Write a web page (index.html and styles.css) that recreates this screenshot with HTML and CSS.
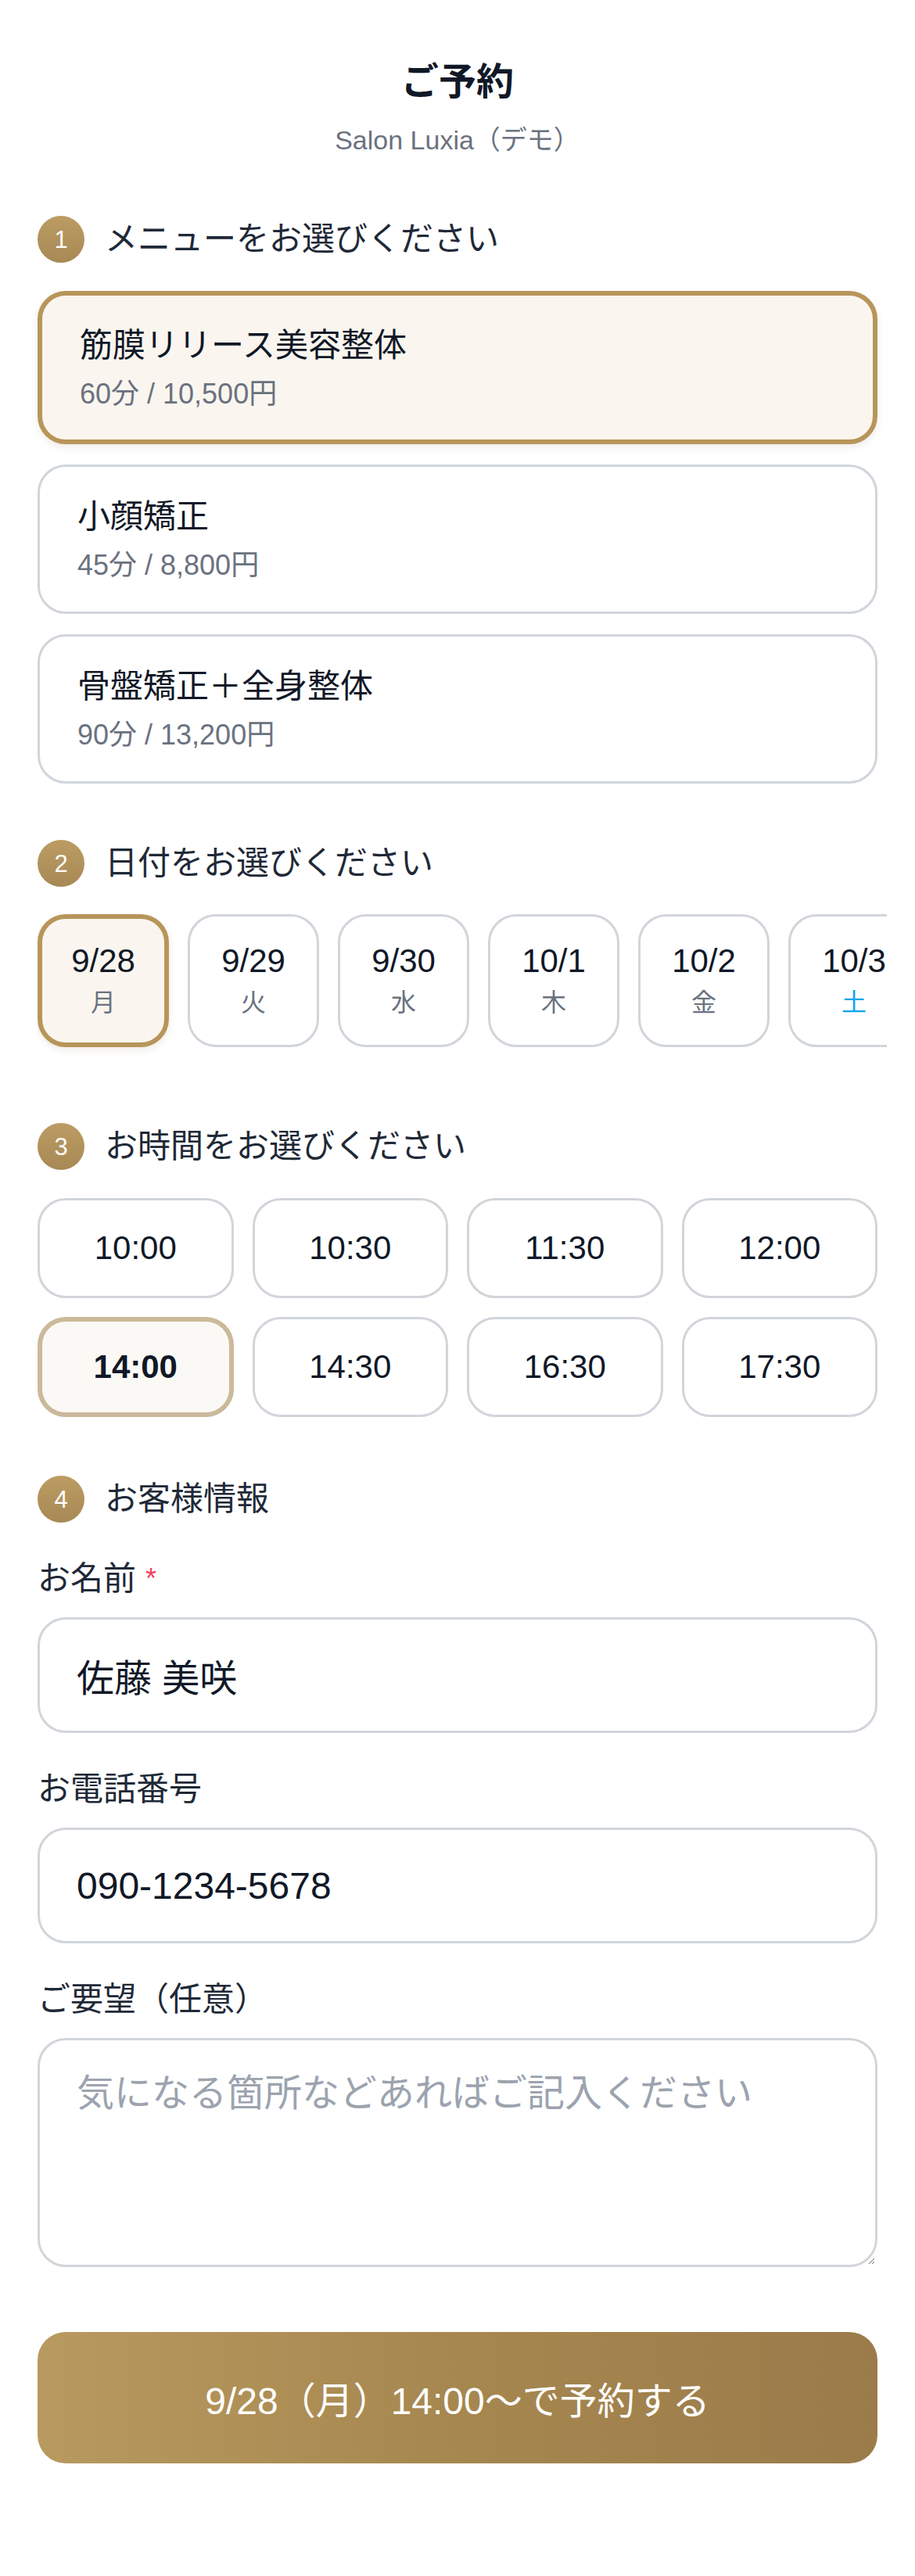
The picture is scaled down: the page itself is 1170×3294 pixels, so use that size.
FILE: index.html
```html
<!DOCTYPE html>
<html lang="ja">
<head>
<meta charset="utf-8">
<title>ご予約 - Salon Luxia</title>
<link rel="stylesheet" href="styles.css">
</head>
<body>
<main class="page">
  <header class="head">
    <h1 class="title">ご予約</h1>
    <p class="subtitle">Salon Luxia（デモ）</p>
  </header>

  <section class="section">
    <h2 class="step"><span class="step-num">1</span>メニューをお選びください</h2>
    <div class="menu-list">
      <div class="menu-card is-selected">
        <div class="menu-name">筋膜リリース美容整体</div>
        <div class="menu-meta">60分 / 10,500円</div>
      </div>
      <div class="menu-card">
        <div class="menu-name">小顔矯正</div>
        <div class="menu-meta">45分 / 8,800円</div>
      </div>
      <div class="menu-card">
        <div class="menu-name">骨盤矯正＋全身整体</div>
        <div class="menu-meta">90分 / 13,200円</div>
      </div>
    </div>
  </section>

  <section class="section">
    <h2 class="step"><span class="step-num">2</span>日付をお選びください</h2>
    <div class="date-row">
      <div class="date-chip is-selected"><span class="date-day">9/28</span><span class="date-week">月</span></div>
      <div class="date-chip"><span class="date-day">9/29</span><span class="date-week">火</span></div>
      <div class="date-chip"><span class="date-day">9/30</span><span class="date-week">水</span></div>
      <div class="date-chip"><span class="date-day">10/1</span><span class="date-week">木</span></div>
      <div class="date-chip"><span class="date-day">10/2</span><span class="date-week">金</span></div>
      <div class="date-chip"><span class="date-day">10/3</span><span class="date-week is-sat">土</span></div>
      <div class="date-chip"><span class="date-day">10/4</span><span class="date-week is-sun">日</span></div>
    </div>
  </section>

  <section class="section">
    <h2 class="step"><span class="step-num">3</span>お時間をお選びください</h2>
    <div class="time-grid">
      <div class="time-chip">10:00</div>
      <div class="time-chip">10:30</div>
      <div class="time-chip">11:30</div>
      <div class="time-chip">12:00</div>
      <div class="time-chip is-selected">14:00</div>
      <div class="time-chip">14:30</div>
      <div class="time-chip">16:30</div>
      <div class="time-chip">17:30</div>
    </div>
  </section>

  <section class="section section-form">
    <h2 class="step"><span class="step-num">4</span>お客様情報</h2>
    <div class="field">
      <label class="label" for="name">お名前<span class="req">*</span></label>
      <input class="input" id="name" type="text" value="佐藤 美咲">
    </div>
    <div class="field">
      <label class="label" for="tel">お電話番号</label>
      <input class="input" id="tel" type="tel" value="090-1234-5678">
    </div>
    <div class="field">
      <label class="label" for="note">ご要望（任意）</label>
      <textarea class="textarea" id="note" placeholder="気になる箇所などあればご記入ください"></textarea>
    </div>
    <button class="submit" type="button">9/28（月）14:00〜で予約する</button>
  </section>
</main>
</body>
</html>
```

FILE: styles.css
```css
html, body {
  margin: 0;
  padding: 0;
  background: #ffffff;
}

body {
  font-family: "Liberation Sans", "Noto Sans CJK JP", sans-serif;
  color: #111827;
}

.page {
  padding: 73px 48px 144px;
}

.head {
  text-align: center;
}

.title {
  margin: 0;
  font-size: 48px;
  line-height: 64px;
  font-weight: 700;
  color: #111827;
}

.subtitle {
  margin: 17px 0 0;
  font-size: 34px;
  line-height: 50px;
  color: #6b7280;
}

.section {
  margin-top: 72px;
}

.section-form {
  margin-top: 75px;
}

.step {
  display: flex;
  align-items: center;
  gap: 26px;
  margin: 0;
  height: 60px;
  font-size: 42px;
  line-height: 60px;
  font-weight: 400;
  color: #1f2937;
}

.step-num {
  flex: none;
  width: 60px;
  height: 60px;
  border-radius: 50%;
  background: linear-gradient(180deg, #bc9c63 0%, #a78955 100%);
  color: #ffffff;
  font-size: 31px;
  line-height: 1;
  display: flex;
  align-items: center;
  justify-content: center;
}

/* Menu */
.menu-list {
  margin-top: 36px;
  display: flex;
  flex-direction: column;
  gap: 26px;
}

.menu-card {
  border: 3px solid #d1d5db;
  border-radius: 36px;
  padding: 32px 48px;
  background: #ffffff;
}

.menu-card.is-selected {
  border: 6px solid #b8955a;
  padding: 32px 48px 31px;
  background: #faf6ef;
  box-shadow: 0 4px 10px rgba(120, 100, 60, 0.12);
}

.menu-name {
  font-size: 42px;
  line-height: 63px;
  height: 63px;
  color: #111827;
}

.menu-meta {
  margin-top: 4px;
  font-size: 36px;
  line-height: 54px;
  height: 54px;
  color: #6b7280;
}

/* Dates */
.date-row {
  margin: 35px -12px 0 0;
  padding-bottom: 25px;
  display: flex;
  gap: 24px;
  overflow: hidden;
}

.date-chip {
  flex: none;
  box-sizing: border-box;
  width: 168px;
  height: 170px;
  border: 3px solid #d1d5db;
  border-radius: 36px;
  background: #ffffff;
  display: flex;
  flex-direction: column;
  align-items: center;
  justify-content: center;
}

.date-chip.is-selected {
  border: 6px solid #b8955a;
  background: #faf6ef;
  box-shadow: 0 4px 10px rgba(120, 100, 60, 0.12);
}

.date-day {
  font-size: 42px;
  line-height: 50px;
  color: #111827;
}

.date-week {
  margin-top: 6px;
  font-size: 32px;
  line-height: 44px;
  color: #6b7280;
}

.date-week.is-sat {
  color: #0ea5e9;
}

.date-week.is-sun {
  color: #ef4444;
}

/* Times */
.time-grid {
  margin-top: 36px;
  display: grid;
  grid-template-columns: repeat(4, 1fr);
  gap: 24px;
}

.time-chip {
  box-sizing: border-box;
  height: 128px;
  border: 3px solid #d1d5db;
  border-radius: 36px;
  background: #ffffff;
  display: flex;
  align-items: center;
  justify-content: center;
  font-size: 42px;
  color: #111827;
}

.time-chip.is-selected {
  border: 6px solid #cbb99b;
  background: #fbf9f5;
  font-weight: 700;
}

/* Form */
.field {
  margin-top: 42px;
}

.label {
  display: flex;
  align-items: center;
  height: 60px;
  margin-bottom: 19px;
  font-size: 42px;
  line-height: 60px;
  color: #1f2937;
}

.req {
  margin-left: 12px;
  color: #f43f5e;
  font-size: 36px;
}

.input,
.textarea {
  display: block;
  width: 100%;
  box-sizing: border-box;
  border: 3px solid #d1d5db;
  border-radius: 36px;
  background: #ffffff;
  font-family: "Liberation Sans", "Noto Sans CJK JP", sans-serif;
  font-size: 48px;
  color: #111827;
  outline: none;
  margin: 0;
}

.input {
  height: 148px;
  padding: 0 47px;
}

.textarea {
  height: 293px;
  padding: 32px 47px;
  line-height: 72px;
  resize: vertical;
}

.textarea::placeholder {
  color: #9ca3af;
}

.submit {
  display: block;
  width: 100%;
  height: 168px;
  margin-top: 83px;
  border: none;
  border-radius: 36px;
  background: linear-gradient(90deg, #b8995f 0%, #a6874f 50%, #9b7b4a 100%);
  color: #ffffff;
  font-family: "Liberation Sans", "Noto Sans CJK JP", sans-serif;
  font-size: 48px;
  cursor: pointer;
}
```
